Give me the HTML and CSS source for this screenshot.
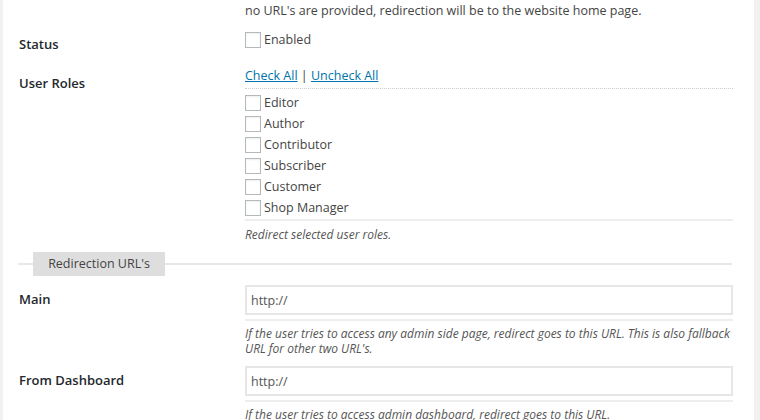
FILE: index.html
```html
<!DOCTYPE html>
<html>

<head>
    <meta charset="utf-8" />
    <title>Redirect Settings</title>
    <link rel="stylesheet" href="styles.css">
</head>

<body>
    <div class="wrap">

        <div class="row row-top">
            <div class="label"></div>
            <div class="field">
                <p class="note">no URL's are provided, redirection will be to the website home page.</p>
            </div>
        </div>

        <div class="row row-status">
            <div class="label">Status</div>
            <div class="field">
                <label class="check"><span class="box"></span>Enabled</label>
            </div>
        </div>

        <div class="row row-roles">
            <div class="label">User Roles</div>
            <div class="field">
                <div class="toggles">
                    <a href="#">Check All</a> | <a href="#">Uncheck All</a>
                </div>
                <div class="roles">
                    <label class="check"><span class="box"></span>Editor</label>
                    <label class="check"><span class="box"></span>Author</label>
                    <label class="check"><span class="box"></span>Contributor</label>
                    <label class="check"><span class="box"></span>Subscriber</label>
                    <label class="check"><span class="box"></span>Customer</label>
                    <label class="check"><span class="box"></span>Shop Manager</label>
                </div>
                <p class="desc">Redirect selected user roles.</p>
            </div>
        </div>

        <div class="section">
            <span class="section-title">Redirection URL's</span>
        </div>

        <div class="row row-url">
            <div class="label">Main</div>
            <div class="field">
                <input class="url" type="text" value="http://">
                <p class="desc">If the user tries to access any admin side page, redirect goes to this URL. This is also fallback URL for other two URL's.</p>
            </div>
        </div>

        <div class="row row-url">
            <div class="label">From Dashboard</div>
            <div class="field">
                <input class="url" type="text" value="http://">
                <p class="desc">If the user tries to access admin dashboard, redirect goes to this URL.</p>
            </div>
        </div>

    </div>
</body>

</html>
```

FILE: styles.css
```css
html,
body {
    margin: 0;
    height: 100%;
    overflow: hidden;
}

body {
    background: #f1f1f1;
    font-family: "Open Sans", sans-serif;
    font-size: 12.5px;
    color: #444;
}

.wrap {
    background: #fff;
    margin-left: 3px;
    width: 751px;
    height: 100%;
    padding-left: 15px;
    box-sizing: border-box;
}

.row {
    display: flex;
}

.label {
    width: 226px;
    flex: none;
    padding-left: 1px;
    font-weight: 600;
    font-size: 13px;
    line-height: 18px;
    color: #23282d;
}

.field {
    width: 488px;
}

p {
    margin: 0;
}

.note {
    padding-top: 3px;
    line-height: 16px;
}

/* status */
.row-status {
    margin-top: 10px;
}

.row-status .label {
    padding-top: 6px;
}

.check {
    display: flex;
    align-items: center;
    height: 21px;
    line-height: 21px;
}

.box {
    width: 14px;
    height: 14px;
    border: 1px solid #b4b9be;
    background: #fff;
    box-shadow: inset 0 1px 2px rgba(0, 0, 0, 0.07);
    margin-right: 3px;
    flex: none;
}

/* user roles */
.row-roles {
    margin-top: 14px;
}

.row-roles .label {
    padding-top: 7px;
}

.toggles {
    line-height: 18px;
    padding-bottom: 3px;
    border-bottom: 1px dotted #ccc;
}

.toggles a {
    color: #0073aa;
}

.roles {
    padding-top: 3px;
    padding-bottom: 1px;
    border-bottom: 2px solid #eee;
}

.desc {
    font-style: italic;
    font-size: 12px;
    color: #555;
    line-height: 15px;
    padding-top: 6px;
}

/* section heading */
.section {
    margin-top: 10px;
    margin-right: 22px;
    height: 24px;
    position: relative;
    display: flex;
    align-items: center;
}

.section::before {
    content: "";
    position: absolute;
    left: 0;
    right: 0;
    top: 11px;
    border-top: 2px solid #e8e8e8;
}

.section-title {
    position: relative;
    margin-left: 15px;
    background: #dedede;
    color: #444;
    line-height: 24px;
    width: 132px;
    text-align: center;
}

/* url rows */
.row-url {
    margin-top: 9px;
}

.row-url .label {
    padding-top: 5px;
}

.row-url + .row-url {
    margin-top: 10px;
}

.url {
    display: block;
    width: 488px;
    height: 30px;
    box-sizing: border-box;
    border: 2px solid #e6e6e6;
    padding: 0 4px;
    font-family: "Open Sans", sans-serif;
    font-size: 12.5px;
    color: #555;
    outline: none;
}

.row-url .desc {
    border-top: 2px solid #eee;
    margin-top: 4px;
    padding-top: 5px;
}
```
